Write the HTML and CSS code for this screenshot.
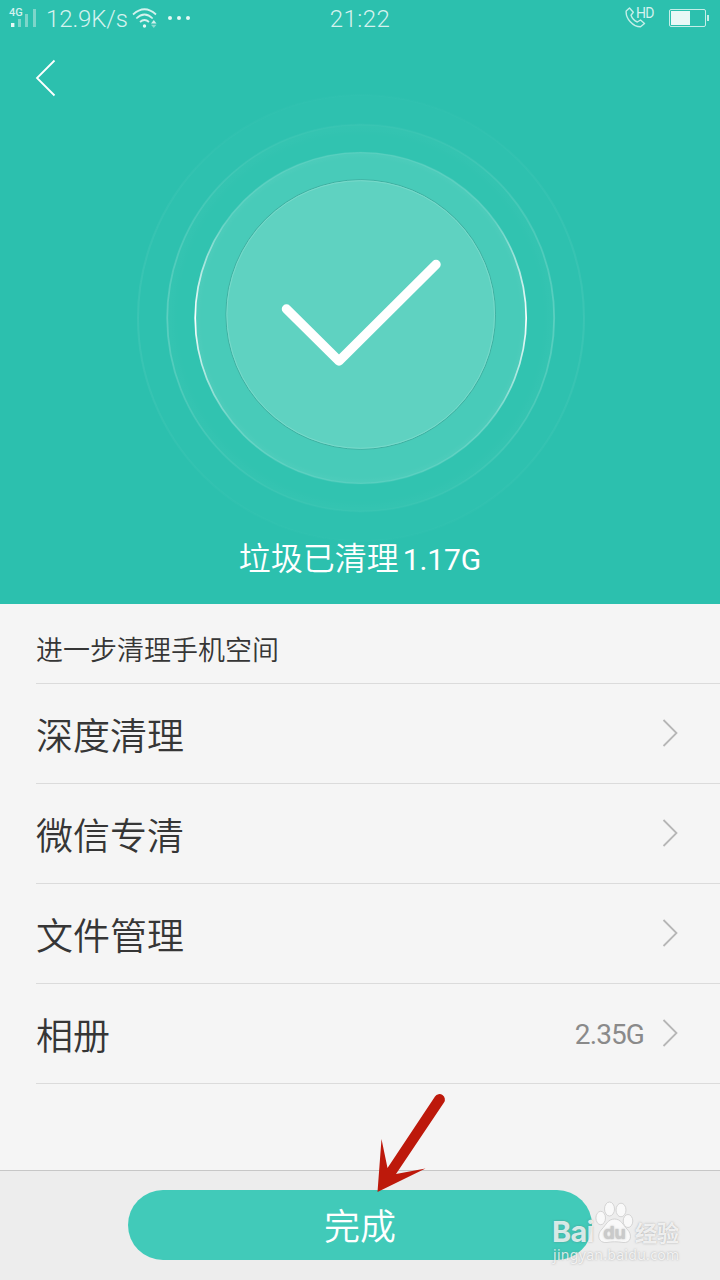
FILE: index.html
```html
<!DOCTYPE html>
<html lang="zh-CN">
<head>
<meta charset="utf-8">
<title>垃圾清理</title>
<link rel="stylesheet" href="styles.css">
</head>
<body>
<main class="screen">
  <header class="hero">
    <div class="status">
      <div class="status-left">
        <div class="signal">
          <span class="net">4G</span>
          <svg class="bars" width="26" height="20" viewBox="0 0 26 20">
            <rect x="2" y="15" width="3.4" height="4" fill="#e6f8f5"/>
            <path d="M9 11h3v8H9zM16 6h3v13h-3zM24 1h3v18h-3z" fill="#7dd6ca"/>
          </svg>
        </div>
        <span class="speed">12.9K/s</span>
        <svg class="wifi" width="26" height="22" viewBox="0 0 26 22" fill="none" stroke="#d5f2ee" stroke-width="1.7">
          <path d="M1 6.500Q12.500-4 24 6.500M4.300 10.500Q12.500 2.500 20.700 10.500M8 14Q12.500 10 17 14"/>
          <circle cx="12.500" cy="18" r="1.700" fill="#e6f8f5" stroke="none"/>
          <path d="M19 15.500l2.800-3.500L24.500 15.500z" fill="#d5f2ee" stroke="none"/>
          <path d="M19 16.800h5.500l-2.700 3.200z" fill="#8edbd0" stroke="none"/>
        </svg>
        <span class="dots"><i></i><i></i><i></i></span>
      </div>
      <time class="clock">21:22</time>
      <div class="status-right">
        <svg width="21" height="22" viewBox="0 0 21 22" fill="none" stroke="#c5eee8" stroke-width="1.400" stroke-linejoin="round">
          <path d="M4.500 1L1.200 4C.5 11.500 8 19.800 15.500 19.800L19.500 16.500L15.500 13L12.300 15C9 13.500 7 11 6 8.200L8.300 5.300Z"/>
        </svg>
        <span class="hd">HD</span>
        <svg class="battery" width="40" height="18" viewBox="0 0 40 18">
          <rect x=".5" y=".5" width="36" height="17" rx="1.500" fill="none" stroke="#c5eee8"/>
          <path d="M2 2h19v14H2z" fill="#e9f8f6"/><path d="M38 6h2v6h-2z" fill="#c5eee8"/>
        </svg>
      </div>
    </div>
    <svg class="back" width="22" height="38" viewBox="0 0 22 38"><path d="M19.500 1.500L2 19L19.500 36.500" fill="none" stroke="#fff" stroke-width="1.800"/></svg>
    <svg class="rings" width="480" height="448" viewBox="120 94 480 448">
      <defs>
        <linearGradient id="r1" x1="0" y1="0" x2="0" y2="1"><stop offset="0" stop-color="#fff" stop-opacity=".07"/><stop offset=".2" stop-color="#fff" stop-opacity=".12"/><stop offset=".5" stop-color="#fff"/><stop offset=".8" stop-color="#fff" stop-opacity=".2"/><stop offset="1" stop-color="#fff" stop-opacity=".07"/></linearGradient>
        <linearGradient id="r2" x1="0" y1="0" x2="0" y2="1"><stop offset="0" stop-color="#fff" stop-opacity=".02"/><stop offset=".5" stop-color="#fff" stop-opacity=".2"/><stop offset="1" stop-color="#fff" stop-opacity=".02"/></linearGradient>
        <linearGradient id="r3" x1="0" y1="0" x2="0" y2="1"><stop offset="0" stop-color="#fff" stop-opacity=".01"/><stop offset=".5" stop-color="#fff" stop-opacity=".07"/><stop offset="1" stop-color="#fff" stop-opacity=".01"/></linearGradient>
        <radialGradient id="glow"><stop offset=".96" stop-color="#fff" stop-opacity="0"/><stop offset="1" stop-color="#fff" stop-opacity=".03"/></radialGradient>
        <radialGradient id="soft"><stop offset=".94" stop-color="#fff" stop-opacity="0"/><stop offset="1" stop-color="#fff" stop-opacity=".02"/></radialGradient>
      </defs>
      <circle cx="361" cy="318" r="223" fill="#2ec1af" stroke="url(#r3)" stroke-width="2"/>
      <circle cx="360.700" cy="318" r="194" fill="#31c3b0"/>
      <circle cx="360.700" cy="318" r="193.500" fill="url(#soft)" stroke="url(#r2)" stroke-width="1.800"/>
      <circle cx="360.700" cy="318" r="166" fill="#48cbb9"/>
      <circle cx="360.700" cy="318" r="165.500" fill="url(#glow)" stroke="url(#r1)" stroke-width="1.700"/>
      <circle cx="360.700" cy="314.500" r="134.800" fill="#5fd2c1" stroke="#3fb0a1" stroke-width="1"/>
      <circle cx="360.700" cy="314.500" r="133.800" fill="none" stroke="#79dacb" stroke-width="1"/>
      <path d="M286.500 309L339 361L436 264.500" fill="none" stroke="#fff" stroke-width="9.500" stroke-linecap="round" stroke-linejoin="round"/>
    </svg>
    <h1 class="result">垃圾已清理<span class="amount">1.17G</span></h1>
  </header>
  <section class="more">
    <h2 class="subtitle">进一步清理手机空间</h2>
    <ul class="list">
      <li class="row"><span>深度清理</span><svg class="chevron" viewBox="0 0 16 28"><path d="M1.500 1L14.500 14L1.500 27"/></svg></li>
      <li class="row"><span>微信专清</span><svg class="chevron" viewBox="0 0 16 28"><path d="M1.500 1L14.500 14L1.500 27"/></svg></li>
      <li class="row"><span>文件管理</span><svg class="chevron" viewBox="0 0 16 28"><path d="M1.500 1L14.500 14L1.500 27"/></svg></li>
      <li class="row"><span>相册</span><span class="value">2.35G</span><svg class="chevron" viewBox="0 0 16 28"><path d="M1.500 1L14.500 14L1.500 27"/></svg></li>
    </ul>
  </section>
  <footer class="footer">
    <button class="done">完成</button>
    <svg class="arrow" width="80" height="110" viewBox="370 1088 80 110">
      <path d="M377.500 1192L381.500 1139L387.500 1168L435 1096.500A5.300 5.300 0 0 1 444 1102.500L396 1174L425.500 1168.500Z" fill="#bd190b"/>
    </svg>
    <div class="watermark">
      <div class="brand">
        <span class="bai">Bai</span>
        <svg class="paw" width="40" height="43" viewBox="0 0 40 43" fill="#fafafa" stroke="#cfcfcf" stroke-width=".9">
          <ellipse cx="5.700" cy="17" rx="4.800" ry="6.700"/><ellipse cx="14.500" cy="8" rx="5" ry="7"/><ellipse cx="26" cy="9" rx="5" ry="6.800"/><ellipse cx="33" cy="20" rx="4.800" ry="6.500"/>
          <path d="M19.500 18C26 18 28 24 32 28C38 34 36 42.500 28 41.500C22 40.500 17 40.500 12 41.500C3.500 42.500 1 34 7 28C11 24 13 18 19.500 18Z"/>
          <text class="du" x="19.500" y="38" text-anchor="middle">du</text>
        </svg>
        <span class="jy">经验</span>
      </div>
      <span class="site">jingyan.baidu.com</span>
    </div>
  </footer>
</main>
</body>
</html>
```
FILE: styles.css
```css
* { box-sizing: border-box; }
body { margin: 0; font-family: Roboto, "Noto Sans CJK SC", sans-serif; }
.screen { width: 720px; height: 1280px; display: flex; flex-direction: column; background: #f5f5f5; overflow: hidden; }
.hero { height: 604px; background: #2cc0ae; color: #fff; display: flex; flex-direction: column; }
.status { height: 38px; flex: none; display: grid; grid-template-columns: 1fr auto 1fr; color: #d5f2ee; font-weight: 300; font-size: 24px; line-height: 38px; }
.status-left { display: flex; padding-left: 9px; }
.signal { position: relative; width: 28px; height: 38px; }
.net { position: absolute; left: 0; top: 7px; font-size: 11px; font-weight: 500; line-height: 12px; }
.bars { position: absolute; left: 0; top: 8px; overflow: visible; }
.speed { width: 86px; margin-left: 9px; letter-spacing: -.1px; white-space: nowrap; }
.wifi { margin: 8px 0 0; }
.dots { display: flex; gap: 5px; margin: 16px 0 0 10px; }
.dots i { width: 4px; height: 4px; border-radius: 50%; background: #e6f8f5; }
.clock { text-align: center; letter-spacing: .4px; }
.status-right { display: flex; justify-content: flex-end; padding: 7px 11px 0 0; }
.hd { font-size: 14px; line-height: 12px; width: 20px; margin-left: -10px; font-weight: 400; letter-spacing: -.8px; }
.battery { margin: 2px 0 0 13px; }
.back { flex: none; margin: 21px 0 0 35px; }
.rings { flex: none; align-self: center; margin-top: -3px; }
.result { margin: -7px 0 0; font-size: 32px; line-height: 48px; font-weight: 350; display: flex; justify-content: center; }
.amount { font-size: 30px; margin: 1px 0 0 4px; font-weight: 400; letter-spacing: -.1px; }
.more { flex: 1; padding-left: 36px; color: #363636; }
.subtitle { margin: 0; height: 80px; padding-top: 12px; line-height: 70px; font-size: 27px; font-weight: 350; border-bottom: 1px solid #dbdbdb; }
.list { margin: 0; padding: 0; list-style: none; }
.row { height: 100px; border-bottom: 1px solid #dbdbdb; display: flex; align-items: center; padding: 1px 42px 0 0; font-size: 37px; font-weight: 350; }
.chevron { width: 16px; height: 28px; margin: -2px 0 0 auto; fill: none; stroke: #b6b6b6; stroke-width: 1.8; }
.value { margin: 1px 0 0 auto; font-size: 28px; font-weight: 400; color: #8a8a8a; letter-spacing: -.9px; }
.value + .chevron { margin-left: 18px; }
.footer { position: relative; height: 110px; border-top: 1px solid #c7c7c7; background: #ededed; display: flex; justify-content: center; padding-top: 19px; }
.done { width: 464px; height: 70px; border: 0; border-radius: 35px; background: #41cab9; color: #fff; font: 350 36px/66px "Noto Sans CJK SC", sans-serif; padding: 0 0 2px; }
.arrow { position: absolute; left: 370px; top: -83px; }
.watermark { position: absolute; left: 552px; top: 30px; width: 132px; color: rgba(255,255,255,.78); text-shadow: 0 0 2px rgba(100,100,100,.5); }
.brand { display: flex; height: 43px; align-items: flex-end; }
.bai { font: 700 29px/22px Inter, sans-serif; width: 43px; letter-spacing: -.7px; margin-bottom: 1px; }
.paw { flex: none; opacity: .95; }
.du { font: 700 18px Inter, sans-serif; fill: #c9c9c9; stroke: none; }
.jy { font: 700 22px/26px "Noto Sans CJK SC", sans-serif; white-space: nowrap; }
.site { display: block; font-family: "Noto Sans", sans-serif; font-size: 14px; line-height: 16px; letter-spacing: .3px; margin: 3px 0 0 1px; }
```
